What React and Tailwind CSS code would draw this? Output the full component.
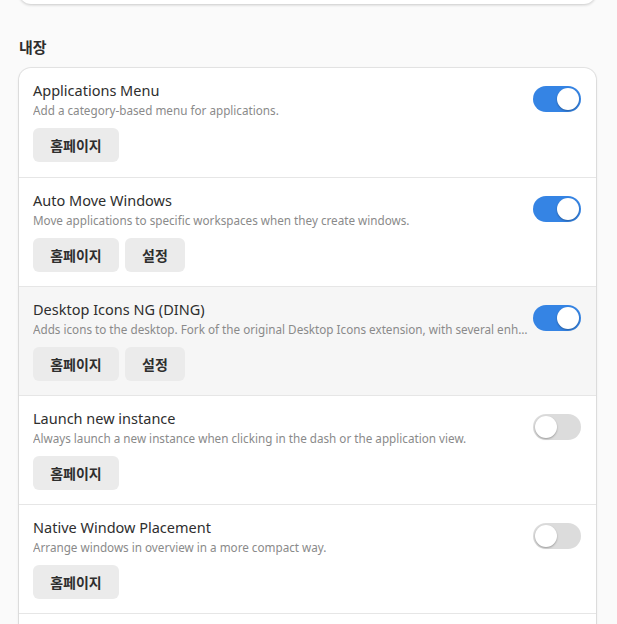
import React from "react";

const rows = [
  { title: "Applications Menu", desc: "Add a category-based menu for applications.", on: true, settings: false },
  { title: "Auto Move Windows", desc: "Move applications to specific workspaces when they create windows.", on: true, settings: true },
  { title: "Desktop Icons NG (DING)", desc: "Adds icons to the desktop. Fork of the original Desktop Icons extension, with several enhancements.", on: true, settings: true, hover: true },
  { title: "Launch new instance", desc: "Always launch a new instance when clicking in the dash or the application view.", on: false, settings: false },
  { title: "Native Window Placement", desc: "Arrange windows in overview in a more compact way.", on: false, settings: false },
  { title: "Places Status Indicator", desc: "Add a menu for quickly navigating places in the system.", on: false, settings: false },
];

function Toggle({ on }) {
  return (
    <div className={`relative w-[48px] h-[26px] rounded-full shrink-0 ${on ? "bg-[#3584e4]" : "bg-[#dcdcdc]"}`}>
      <div
        className={`absolute top-[2px] w-[22px] h-[22px] rounded-full bg-white shadow-[0_1px_2px_rgba(0,0,0,0.3)] ${on ? "left-[24px]" : "left-[2px]"}`}
      />
    </div>
  );
}

function Btn({ children, w }) {
  return (
    <button className={`h-[34px] ${w} rounded-[6px] bg-[#ebebeb] text-[14px] font-bold text-[#2e2e2e] flex items-center justify-center`}>
      {children}
    </button>
  );
}

export default function App() {
  return (
    <div
      className="w-[617px] h-[624px] overflow-hidden bg-[#fafafa] text-[#2e2e2e]"
      style={{ fontFamily: '"Noto Sans", "Noto Sans CJK KR", sans-serif' }}
    >
      <div className="ml-[19px] w-[577px] h-[4px] -mt-[8px] pt-[8px] box-content bg-white rounded-b-[12px] shadow-[0_1px_3px_rgba(0,0,0,0.2)]" />
      <div className="px-[19px] pt-[32px] pb-[10px] text-[15px] font-bold leading-[22px]">내장</div>
      <div className="ml-[19px] w-[577px] bg-white rounded-t-[12px] shadow-[0_0_0_1px_rgba(0,0,0,0.08),0_1px_3px_rgba(0,0,0,0.12)] overflow-hidden">
        {rows.map((r, i) => (
          <div
            key={i}
            className={`h-[109px] flex items-start pl-[14px] pr-[15px] pt-[12px] ${i > 0 ? "border-t border-[#e6e6e6]" : ""} ${r.hover ? "bg-[#f6f6f6]" : ""}`}
          >
            <div className="flex-1 min-w-0">
              <div className="text-[14.5px] leading-[21px] text-[#2e2e2e]">{r.title}</div>
              <div className="text-[11.7px] leading-[18px] text-[#8a8a8a] truncate pr-[1px]">{r.desc}</div>
              <div className="flex gap-[6px] mt-[9px]">
                <Btn w="w-[86px]">홈페이지</Btn>
                {r.settings && <Btn w="w-[60px]">설정</Btn>}
              </div>
            </div>
            <div className="pt-[6px] pl-[1px]">
              <Toggle on={r.on} />
            </div>
          </div>
        ))}
      </div>
    </div>
  );
}
